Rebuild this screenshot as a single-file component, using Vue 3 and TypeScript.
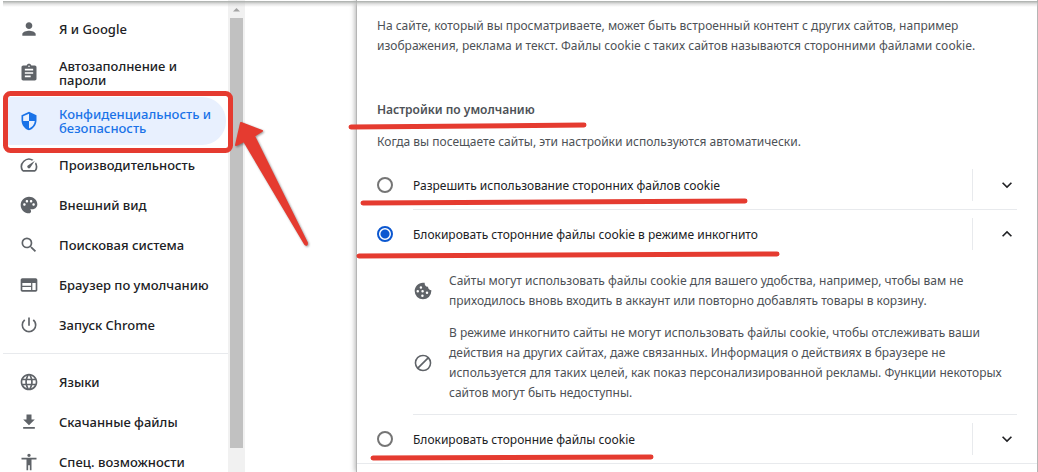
<script setup lang="ts">
import { ref } from 'vue'

interface NavItem {
  label: string[]
  path: string
  active?: boolean
}

const mainNav: NavItem[] = [
  {
    label: ['Я и Google'],
    path: 'M12 12c2.21 0 4-1.79 4-4s-1.79-4-4-4-4 1.79-4 4 1.79 4 4 4zm0 2c-2.67 0-8 1.34-8 4v2h16v-2c0-2.66-5.33-4-8-4z',
  },
  {
    label: ['Автозаполнение и', 'пароли'],
    path: 'M19 3h-4.18C14.4 1.84 13.3 1 12 1s-2.4.84-2.82 2H5c-1.1 0-2 .9-2 2v14c0 1.1.9 2 2 2h14c1.1 0 2-.9 2-2V5c0-1.1-.9-2-2-2zm-7 0c.55 0 1 .45 1 1s-.45 1-1 1-1-.45-1-1 .45-1 1-1zm2 14H7v-2h7v2zm3-4H7v-2h10v2zm0-4H7V7h10v2z',
  },
  {
    label: ['Конфиденциальность и', 'безопасность'],
    path: 'M12 1L3 5v6c0 5.55 3.84 10.74 9 12 5.16-1.26 9-6.45 9-12V5l-9-4zm0 10.99h7c-.53 4.12-3.28 7.79-7 8.94V12H5V6.3l7-3.11v8.8z',
    active: true,
  },
  {
    label: ['Производительность'],
    path: 'M20.38 8.57l-1.23 1.85a8 8 0 0 1-.22 7.58H5.07A8 8 0 0 1 15.58 6.85l1.85-1.23A10 10 0 0 0 3.35 19a2 2 0 0 0 1.72 1h13.85a2 2 0 0 0 1.74-1 10 10 0 0 0-.27-10.44zM10.59 15.41a2 2 0 0 0 2.83 0l5.66-8.49-8.49 5.66a2 2 0 0 0 0 2.83z',
  },
  {
    label: ['Внешний вид'],
    path: 'M12 2C6.49 2 2 6.49 2 12s4.49 10 10 10c1.38 0 2.5-1.12 2.5-2.5 0-.61-.23-1.2-.64-1.67-.08-.1-.13-.21-.13-.33 0-.28.22-.5.5-.5H16c3.31 0 6-2.69 6-6 0-4.96-4.49-9-10-9zM6.5 13c-.83 0-1.5-.67-1.5-1.5S5.67 10 6.5 10s1.5.67 1.5 1.5S7.33 13 6.5 13zm3-4C8.67 9 8 8.33 8 7.5S8.67 6 9.5 6s1.5.67 1.5 1.5S10.33 9 9.5 9zm5 0c-.83 0-1.5-.67-1.5-1.5S13.67 6 14.5 6s1.5.67 1.5 1.5S15.33 9 14.5 9zm3 4c-.83 0-1.5-.67-1.5-1.5s.67-1.5 1.5-1.5 1.5.67 1.5 1.5-.67 1.5-1.5 1.5z',
  },
  {
    label: ['Поисковая система'],
    path: 'M15.5 14h-.79l-.28-.27A6.471 6.471 0 0 0 16 9.5 6.5 6.5 0 1 0 9.5 16c1.61 0 3.09-.59 4.23-1.57l.27.28v.79l5 4.99L20.49 19l-4.99-5zm-6 0C7.01 14 5 11.99 5 9.5S7.01 5 9.5 5 14 7.01 14 9.5 11.99 14 9.5 14z',
  },
  {
    label: ['Браузер по умолчанию'],
    path: 'M20 4H4c-1.1 0-2 .9-2 2v12c0 1.1.9 2 2 2h16c1.1 0 2-.9 2-2V6c0-1.1-.9-2-2-2zm-5.5 14H4v-3.5h10.5V18zm0-5H4V9.5h10.5V13zm5.5 5h-4V9.5h4V18z',
  },
  {
    label: ['Запуск Chrome'],
    path: 'M13 3h-2v10h2V3zm4.83 2.17l-1.42 1.42A6.92 6.92 0 0 1 19 12c0 3.87-3.13 7-7 7s-7-3.13-7-7c0-2.19 1.01-4.14 2.58-5.42L6.17 5.17A8.932 8.932 0 0 0 3 12a9 9 0 0 0 18 0c0-2.74-1.23-5.18-3.17-6.83z',
  },
]

const extraNav: NavItem[] = [
  {
    label: ['Языки'],
    path: 'M11.99 2C6.47 2 2 6.48 2 12s4.47 10 9.99 10C17.52 22 22 17.52 22 12S17.52 2 11.99 2zm6.93 6h-2.95a15.65 15.65 0 0 0-1.38-3.56A8.03 8.03 0 0 1 18.92 8zM12 4.04c.83 1.2 1.48 2.53 1.91 3.96h-3.82c.43-1.43 1.08-2.76 1.91-3.96zM4.26 14C4.1 13.36 4 12.69 4 12s.1-1.36.26-2h3.38c-.08.66-.14 1.32-.14 2s.06 1.34.14 2H4.26zm.82 2h2.95c.32 1.25.78 2.45 1.38 3.56A7.987 7.987 0 0 1 5.08 16zm2.95-8H5.08a7.987 7.987 0 0 1 4.33-3.56A15.65 15.65 0 0 0 8.03 8zM12 19.96c-.83-1.2-1.48-2.53-1.91-3.96h3.82c-.43 1.43-1.08 2.76-1.91 3.96zM14.34 14H9.66c-.09-.66-.16-1.32-.16-2s.07-1.35.16-2h4.68c.09.65.16 1.32.16 2s-.07 1.34-.16 2zm.25 5.56c.6-1.11 1.06-2.31 1.38-3.56h2.95a8.03 8.03 0 0 1-4.33 3.56zM16.36 14c.08-.66.14-1.32.14-2s-.06-1.34-.14-2h3.38c.16.64.26 1.31.26 2s-.1 1.36-.26 2h-3.38z',
  },
  {
    label: ['Скачанные файлы'],
    path: 'M19 9h-4V3H9v6H5l7 7 7-7zM5 18v2h14v-2H5z',
  },
  {
    label: ['Спец. возможности'],
    path: 'M12 2c1.1 0 2 .9 2 2s-.9 2-2 2-2-.9-2-2 .9-2 2-2zm9 7h-6v13h-2v-6h-2v6H9V9H3V7h18v2z',
  },
]

const groups = [mainNav, extraNav]

const selected = ref('incognito')

const options = [
  { id: 'allow', label: 'Разрешить использование сторонних файлов cookie', open: false },
  { id: 'incognito', label: 'Блокировать сторонние файлы cookie в режиме инкогнито', open: true },
  { id: 'block', label: 'Блокировать сторонние файлы cookie', open: false },
]

const cookiePath =
  'M22 11c-2 0-4-1.3-4-4-2.5.3-4.4-2-4-4.8C7.5.8 2 6 2 12a10 10 0 0 0 20 0zM9.5 6.2a1.5 1.5 0 1 1 0 3 1.5 1.5 0 0 1 0-3zM5.7 10.7a1.5 1.5 0 1 1 0 3 1.5 1.5 0 0 1 0-3zM11.5 10.7a1.5 1.5 0 1 1 0 3 1.5 1.5 0 0 1 0-3zM16.8 12.7a1.5 1.5 0 1 1 0 3 1.5 1.5 0 0 1 0-3zM11.3 16.2a1.5 1.5 0 1 1 0 3 1.5 1.5 0 0 1 0-3z'
const blockPath =
  'M12 2a10 10 0 1 0 0 20 10 10 0 0 0 0-20zm0 2c1.85 0 3.55.63 4.9 1.69L5.69 16.9A8 8 0 0 1 12 4zm0 16a7.9 7.9 0 0 1-4.9-1.69L18.31 7.1A8 8 0 0 1 12 20z'

const details = [
  {
    path: cookiePath,
    lines: [
      'Сайты могут использовать файлы cookie для вашего удобства, например, чтобы вам не',
      'приходилось вновь входить в аккаунт или повторно добавлять товары в корзину.',
    ],
  },
  {
    path: blockPath,
    lines: [
      'В режиме инкогнито сайты не могут использовать файлы cookie, чтобы отслеживать ваши',
      'действия на других сайтах, даже связанных. Информация о действиях в браузере не',
      'используется для таких целей, как показ персонализированной рекламы. Функции некоторых',
      'сайтов могут быть недоступны.',
    ],
  },
]
</script>

<template>
  <div class="page">
    <div class="top-shade"></div>
    <nav class="sidebar">
      <ul v-for="(group, g) in groups" :key="g" class="group">
        <li v-for="item in group" :key="item.label[0]">
          <a href="#" class="nav-item" :class="{ active: item.active, tall: item.label.length > 1 }">
            <svg class="icon" viewBox="0 0 24 24"><path :d="item.path" /></svg>
            <span><span v-for="line in item.label" :key="line" class="line">{{ line }}</span></span>
          </a>
        </li>
      </ul>
    </nav>
    <div class="scrollbar">
      <svg class="up" viewBox="0 0 17 17"><path d="M5 11h7L8.5 7.5z" /></svg>
      <div class="thumb"></div>
    </div>

    <main class="panel">
      <p class="text">
        <span class="line">На сайте, который вы просматриваете, может быть встроенный контент с других сайтов, например</span>
        <span class="line">изображения, реклама и текст. Файлы cookie с таких сайтов называются сторонними файлами cookie.</span>
      </p>
      <h2>Настройки по умолчанию</h2>
      <p class="text">Когда вы посещаете сайты, эти настройки используются автоматически.</p>

      <div class="options">
        <section v-for="opt in options" :key="opt.id" class="option">
          <div class="row">
            <input :id="opt.id" v-model="selected" type="radio" name="cookies" :value="opt.id" />
            <label :for="opt.id">{{ opt.label }}</label>
            <button type="button" :aria-label="opt.label" :aria-expanded="opt.open">
              <svg class="icon" viewBox="0 0 24 24">
                <path v-if="opt.open" d="M12 8l-6 6 1.41 1.41L12 10.83l4.59 4.58L18 14z" />
                <path v-else d="M16.59 8.59L12 13.17 7.41 8.59 6 10l6 6 6-6z" />
              </svg>
            </button>
          </div>
          <div v-if="opt.open" class="details">
            <div v-for="(d, i) in details" :key="i" class="detail">
              <svg class="icon" viewBox="0 0 24 24"><path :d="d.path" fill-rule="evenodd" /></svg>
              <p class="text"><span v-for="line in d.lines" :key="line" class="line">{{ line }}</span></p>
            </div>
          </div>
        </section>
      </div>
    </main>

    <svg class="marks" width="1038" height="472" viewBox="0 0 1038 472" aria-hidden="true">
      <rect x="5.5" y="93.5" width="225" height="57" rx="5" />
      <path d="M351 127L584 125" />
      <path d="M363 203L745 201" />
      <path d="M359 256L777 254" />
      <path d="M373 458L651 457" />
      <path class="arrow" d="M241 123L262 131L254 136L307 243Q307 246 305 244L244 141L236 145Z" />
    </svg>
  </div>
</template>

<style>
body {
  margin: 0;
  overflow: hidden;
}
</style>

<style scoped>
.page {
  position: relative;
  display: flex;
  height: 100vh;
  overflow: hidden;
  padding-left: 3px;
  box-sizing: border-box;
  background: #fff;
  font-family: 'Noto Sans', 'Open Sans', sans-serif;
  font-size: 12px;
  color: #202124;
}
.top-shade {
  position: absolute;
  left: 3px;
  right: 0;
  top: 1px;
  height: 6px;
  background: linear-gradient(#a9adaa, rgba(200, 200, 200, 0.5) 50%, rgba(255, 255, 255, 0));
}
.sidebar {
  width: 225px;
  flex: none;
  padding-top: 9px;
}
.group {
  list-style: none;
  margin: 0;
  padding: 0;
}
.group + .group {
  margin-top: 8px;
  padding-top: 8px;
  border-top: 1px solid #e8eaed;
}
.nav-item {
  display: flex;
  align-items: center;
  gap: 20px;
  height: 40px;
  margin-right: 2px;
  padding-left: 16px;
  border-radius: 0 24px 24px 0;
  color: #202124;
  text-decoration: none;
  font-size: 13px;
  font-weight: 500;
  line-height: 14px;
}
.nav-item.tall {
  height: 48px;
}
.nav-item.active {
  background: #e8f0fe;
  color: #1a73e8;
}
.nav-item.active .icon {
  fill: #1a73e8;
}
.line {
  display: block;
  white-space: nowrap;
}
.icon {
  width: 20px;
  height: 20px;
  flex: none;
  fill: #5f6368;
}
.scrollbar {
  width: 17px;
  flex: none;
  padding-bottom: 24px;
  box-sizing: border-box;
  display: flex;
  flex-direction: column;
  align-items: center;
  background: #f1f1f1;
}
.up {
  width: 17px;
  height: 18px;
  fill: #a3a3a3;
}
.thumb {
  width: 13px;
  flex: 1;
  background: #c1c1c1;
}
.panel {
  flex: 1;
  min-width: 0;
  margin-left: 111px;
  padding-top: 16px;
  border: solid #b5b5b5;
  border-width: 0 1px;
  box-shadow: -1px 0 5px rgba(0, 0, 0, 0.3);
}
.text {
  margin: 0;
  line-height: 20px;
  color: #4d5156;
}
.panel > .text,
h2 {
  padding: 0 20px;
}
h2 {
  margin: 44px 0 12px;
  font-size: 12px;
  line-height: 20px;
  font-weight: 600;
  color: #4d5156;
}
.options {
  margin-top: 9px;
  border-bottom: 1px solid #e8eaed;
}
.option {
  padding: 0 20px;
}
.row {
  display: flex;
  align-items: center;
  height: 48px;
}
.option:not(:last-child)::after {
  content: '';
  display: block;
  height: 1px;
  margin-left: 36px;
  background: #e8eaed;
}
input {
  appearance: none;
  flex: none;
  box-sizing: border-box;
  width: 16px;
  height: 16px;
  margin: 0 20px 0 0;
  border: 2px solid #757575;
  border-radius: 50%;
  background: #fff;
}
input:checked {
  border-color: #0b57d0;
  background: radial-gradient(circle, #0b57d0 4px, #fff 5px);
}
label {
  flex: 1;
  white-space: nowrap;
}
button {
  display: flex;
  justify-content: flex-end;
  width: 45px;
  height: 32px;
  padding: 6px 0;
  border: 0;
  border-left: 1px solid #e8eaed;
  background: none;
}
button .icon {
  fill: #202124;
}
.details {
  display: grid;
  gap: 12px;
  padding: 13px 0 11px 36px;
}
.detail {
  display: flex;
  align-items: center;
  gap: 16px;
}
.marks {
  position: absolute;
  left: 0;
  top: 0;
  fill: none;
  stroke: #e53b30;
  stroke-width: 5;
  stroke-linecap: round;
  stroke-linejoin: round;
  pointer-events: none;
}
.arrow {
  fill: #e53b30;
  stroke-width: 2;
  filter: drop-shadow(1px 1px 1px rgba(0, 0, 0, 0.4));
}
</style>
